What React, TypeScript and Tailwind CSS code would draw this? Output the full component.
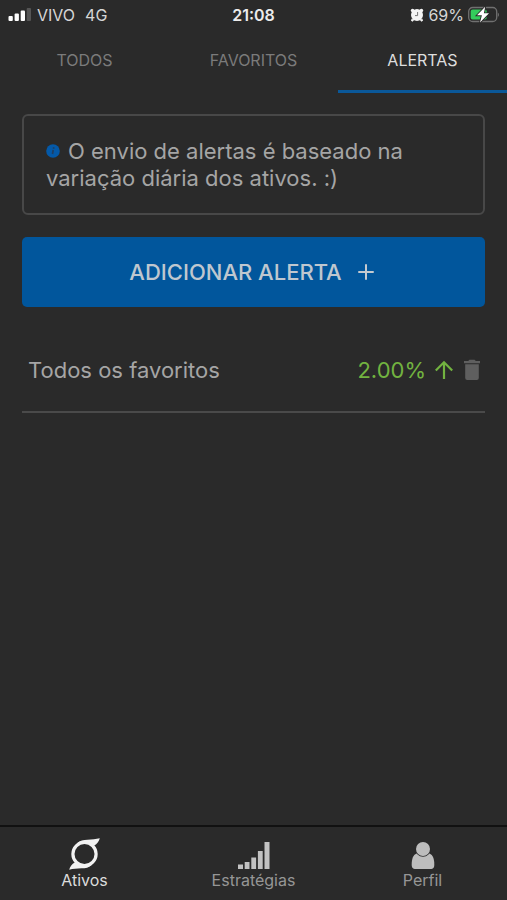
import { useState } from "react";

interface Alert {
  id: number;
  name: string;
  variation: string;
}

const tabs = ["TODOS", "FAVORITOS", "ALERTAS"];

const initialAlerts: Alert[] = [
  { id: 1, name: "Todos os favoritos", variation: "2.00%" },
];

function SignalIcon() {
  return (
    <svg width="23" height="14" viewBox="0 0 23 14" fill="#fff" aria-hidden="true">
      <rect x="0.500" y="8" width="4.300" height="5" rx="1" />
      <rect x="6.600" y="5.500" width="4.300" height="7.500" rx="1" />
      <rect x="12.700" y="2.500" width="4.300" height="10.500" rx="1" />
      <rect x="18.700" y="0" width="4.300" height="13" rx="1" fill="#555" />
    </svg>
  );
}

function AlarmIcon() {
  return (
    <svg width="14" height="14" viewBox="0 0 14 14" aria-hidden="true">
      <g fill="#f4f4f4">
        <circle cx="7" cy="7" r="6" />
        <circle cx="2.600" cy="2.600" r="1.800" />
        <circle cx="11.400" cy="2.600" r="1.800" />
        <path d="M1.800 10.500l2.200 1.700-1.500 1.600-1.600-1.400zM12.200 10.500L10 12.200l1.500 1.600 1.600-1.400z" />
      </g>
      <path d="M7.600 4v3.600H5" fill="none" stroke="#777" strokeWidth="1" />
    </svg>
  );
}

function BatteryIcon() {
  return (
    <svg width="31" height="18" viewBox="0 0 31 18" aria-hidden="true">
      <rect x="0.700" y="1.500" width="28" height="14" rx="4" fill="none" stroke="#707070" strokeWidth="1.300" />
      <path d="M29.800 6.500V11c.8-.5 1.200-1.300 1.200-2.250S30.600 7 29.800 6.500z" fill="#707070" />
      <rect x="2.700" y="3.500" width="16" height="10" rx="2" fill="#33cc5c" />
      <path
        d="M17.200.800L9 9.300h4.900L12 16.500l9-9.200h-5.100z"
        fill="#fff"
        stroke="#2a2a2a"
        strokeWidth="1.800"
        paintOrder="stroke"
      />
    </svg>
  );
}

function InfoIcon() {
  return (
    <svg className="mr-2 inline-block align-baseline" width="14" height="15" viewBox="0 0 14 15" aria-hidden="true">
      <circle cx="7" cy="7" r="6.800" fill="#0459a8" />
      <path d="M7.800 3.300l-.3 1.400M7.200 6L6.500 10" stroke="#1f3f63" strokeWidth="1.700" />
    </svg>
  );
}

function PlusIcon() {
  return (
    <svg width="16" height="16" viewBox="0 0 16 16" stroke="#c4cad0" strokeWidth="2" strokeLinecap="round" aria-hidden="true">
      <path d="M8 1v14M1 8h14" />
    </svg>
  );
}

function ArrowUpIcon() {
  return (
    <svg width="20" height="20" viewBox="0 0 20 20" fill="none" stroke="#72b340" strokeWidth="2.200" aria-hidden="true">
      <path d="M10 19V3M1.800 10.500L10 2.300l8.200 8.200" />
    </svg>
  );
}

function TrashIcon() {
  return (
    <svg width="16" height="22" viewBox="0 0 16 22" fill="#5f5f5f" aria-hidden="true">
      <path d="M0 2h4.200l1.200-1.300h5.200L11.800 2H16v2.200H0z" />
      <path d="M1.200 5.300h13.600v13.700a2 2 0 0 1-2 2H3.200a2 2 0 0 1-2-2z" />
    </svg>
  );
}

function AssetsIcon() {
  return (
    <svg width="32" height="32" viewBox="0 0 32 32" fill="#f2f2f2" aria-hidden="true">
      <circle cx="15.500" cy="16" r="11.600" fill="none" stroke="#f2f2f2" strokeWidth="3.200" />
      <path d="M8 5.300C11 2.300 14.500 1.800 18.500 1.700 23 1.600 27 1.200 30.800.300 30 3.500 28 6 25.300 7.600L23.300 7.200C20 4.400 15 3.600 11 5z" />
      <path d="M23 26.700C20 29.700 16.500 30.200 12.500 30.300 8 30.400 4 30.800.200 31.700 1 28.500 3 26 5.700 24.400L7.700 24.800C11 27.600 16 28.400 20 27z" />
    </svg>
  );
}

function StrategiesIcon() {
  return (
    <svg width="32" height="28" viewBox="0 0 32 28" fill="#c2c2c2" aria-hidden="true">
      <rect x="0" y="22.500" width="5" height="4.500" />
      <rect x="6.700" y="20" width="4.800" height="7" />
      <rect x="13.300" y="15.500" width="4.800" height="11.500" />
      <rect x="19.900" y="9" width="4.800" height="18" />
      <rect x="26.500" y="0" width="5" height="27" />
    </svg>
  );
}

function ProfileIcon() {
  return (
    <svg width="24" height="28" viewBox="0 0 24 28" fill="#bdbdbd" aria-hidden="true">
      <path d="M5.500 11.500C2 13 .7 17 .7 22.500.7 26 2 27 4.500 27h15c2.500 0 3.800-1 3.800-4.500 0-5.500-1.300-9.500-4.800-11z" />
      <circle cx="12" cy="7" r="7" stroke="#2a2a2a" strokeWidth="1.500" paintOrder="stroke" />
    </svg>
  );
}

const navItems = [
  { label: "Ativos", Icon: AssetsIcon },
  { label: "Estratégias", Icon: StrategiesIcon },
  { label: "Perfil", Icon: ProfileIcon },
];

export default function App() {
  const [activeTab, setActiveTab] = useState("ALERTAS");
  const [alerts, setAlerts] = useState(initialAlerts);

  const addAlert = () =>
    setAlerts([...alerts, { ...initialAlerts[0], id: Date.now() }]);

  const removeAlert = (id: number) =>
    setAlerts(alerts.filter((alert) => alert.id !== id));

  return (
    <div className="flex min-h-screen flex-col bg-[#2a2a2a] font-['Inter','Liberation_Sans',sans-serif] text-[#a5a5a5]">
      <header>
        <div className="grid h-[30px] grid-cols-3 items-center px-2 text-base text-[#d6d6d6]">
          <div className="flex items-center gap-[6px]">
            <SignalIcon />
            <span>VIVO</span>
            <span className="ml-1">4G</span>
          </div>
          <span className="text-center font-semibold text-[#ececec]">21:08</span>
          <div className="flex items-center justify-end gap-1">
            <AlarmIcon />
            <span>69%</span>
            <BatteryIcon />
          </div>
        </div>
        <div role="tablist" className="grid h-[63px] grid-cols-3">
          {tabs.map((tab) => (
            <button
              key={tab}
              role="tab"
              aria-selected={tab === activeTab}
              onClick={() => setActiveTab(tab)}
              className={
                tab === activeTab
                  ? "border-b-3 border-[#0a5899] text-base text-[#dedede]"
                  : "border-b-3 border-transparent text-base text-[#7b7b7b]"
              }
            >
              {tab}
            </button>
          ))}
        </div>
      </header>

      <main className="flex-1 px-[22px] pt-[21px]">
        <p className="rounded-md border-2 border-[#484848] px-[22px] pt-[22px] pb-[21px] text-[22px] leading-[27px]">
          <InfoIcon />
          O envio de alertas é baseado na variação diária dos ativos. :)
        </p>

        <button
          onClick={addAlert}
          className="mt-[22px] flex h-[70px] w-full items-center justify-center gap-4 rounded-[5px] bg-[#01569c] pr-1 text-[22px] font-medium text-[#bfc7cf]"
        >
          ADICIONAR ALERTA
          <PlusIcon />
        </button>

        <ul className="mt-[22px]">
          {alerts.map((alert) => (
            <li
              key={alert.id}
              className="flex h-[84px] items-center border-b-2 border-[#4a4a4a] pr-[5px] pl-[6px] text-[22px]"
            >
              <span className="flex-1">{alert.name}</span>
              <span className="mr-2 text-[#72b340]">{alert.variation}</span>
              <ArrowUpIcon />
              <button
                aria-label="Remover alerta"
                onClick={() => removeAlert(alert.id)}
                className="ml-[10px]"
              >
                <TrashIcon />
              </button>
            </li>
          ))}
        </ul>
      </main>

      <nav className="grid h-[75px] grid-cols-3 border-t-2 border-[#111111]">
        {navItems.map(({ label, Icon }, i) => (
          <a
            key={label}
            href="#"
            className={
              i === 0
                ? "flex flex-col items-center justify-end pb-[10px] text-base text-[#dcdcdc]"
                : "flex flex-col items-center justify-end pb-[10px] text-base text-[#969696]"
            }
          >
            <Icon />
            <span className="leading-5">{label}</span>
          </a>
        ))}
      </nav>
    </div>
  );
}
